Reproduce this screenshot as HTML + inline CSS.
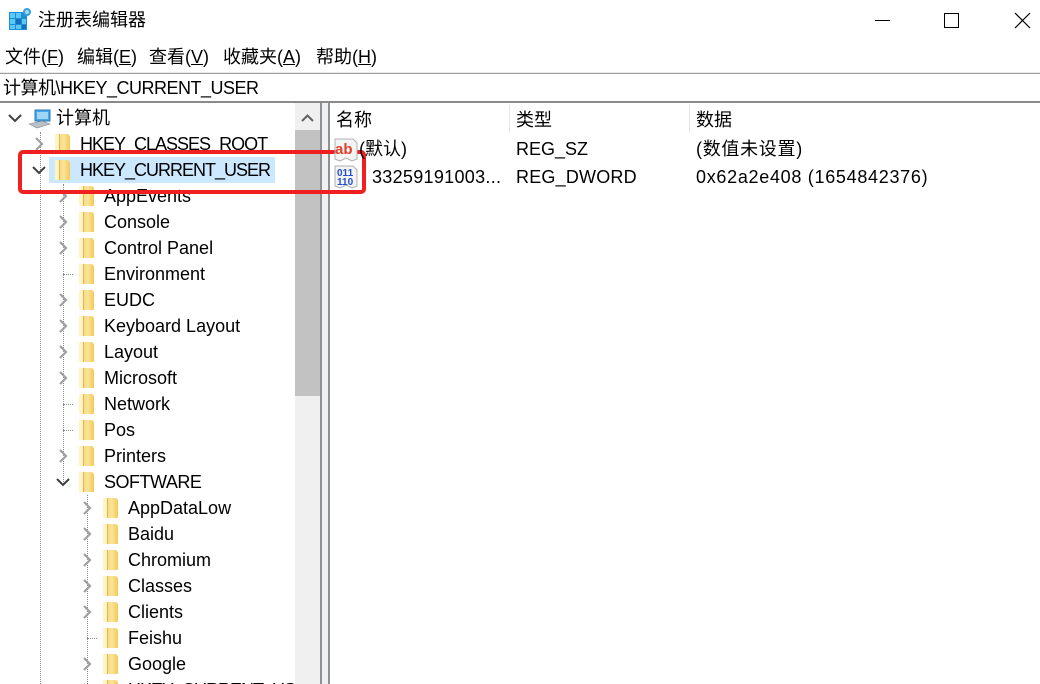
<!DOCTYPE html>
<html style="width:1040px;height:684px;overflow:hidden"><head><meta charset="utf-8"><style>
*{margin:0;padding:0;box-sizing:border-box}
body{width:1040px;height:684px;overflow:hidden;background:#fff;font-family:"Liberation Sans","Noto Sans CJK SC",sans-serif;color:#000;position:relative}
.a{position:absolute;white-space:nowrap}
.t{font-size:18px;line-height:26px;height:26px}
.f{position:absolute;width:15px;height:20px;background:linear-gradient(90deg,#f0c84a 0,#f8dc80 30%,#fbe39a 60%,#f2c955 100%);border-radius:1px 3px 1px 1px}
.f:before{content:"";position:absolute;left:0;top:0;width:4px;height:20px;background:#fff3c8;border-right:1px solid #e0b84a}
.dv{position:absolute;border-left:1px dotted #8a8a8a;width:0}
.dh{position:absolute;border-top:1px dotted #8a8a8a;height:0}
.m{position:absolute;top:45px;font-size:18px;line-height:24px;white-space:nowrap}
</style></head><body>
<svg class="a" style="left:9px;top:7px" width="23" height="24" viewBox="0 0 23 24">
<rect x="0" y="5" width="18" height="18" fill="#1e8fd6"/>
<g fill="#5cc8f5"><rect x="1" y="6" width="5" height="5"/><rect x="7" y="6" width="5" height="5"/><rect x="1" y="12" width="5" height="5"/><rect x="13" y="12" width="4" height="5"/><rect x="7" y="18" width="5" height="4"/><rect x="1" y="18" width="5" height="4"/></g>
<g fill="#1670b8"><rect x="7" y="12" width="5" height="5"/><rect x="13" y="18" width="4" height="4"/></g>
<circle cx="18" cy="5" r="4" fill="#3aa0e0"/><circle cx="18" cy="5" r="2" fill="#9fd8f8"/>
</svg>
<div class="a" style="left:38px;top:8px;font-size:18px;line-height:24px">注册表编辑器</div>
<div class="a" style="left:875px;top:20px;width:15px;height:1px;background:#000"></div>
<div class="a" style="left:944px;top:13px;width:15px;height:15px;border:1px solid #000"></div>
<svg class="a" style="left:1014px;top:12px" width="17" height="17"><path d="M1 1L16 16M16 1L1 16" stroke="#000" stroke-width="1.2"/></svg>
<div class="m" style="left:5px">文件(<u>F</u>)</div>
<div class="m" style="left:77px">编辑(<u>E</u>)</div>
<div class="m" style="left:149px">查看(<u>V</u>)</div>
<div class="m" style="left:223px">收藏夹(<u>A</u>)</div>
<div class="m" style="left:316px">帮助(<u>H</u>)</div>
<div class="a" style="left:0;top:72px;width:1040px;height:2px;background:#a0a0a0;border-top:1px solid #e8e8e8"></div>
<div class="a" style="left:3px;top:76px;font-size:18px;line-height:24px;letter-spacing:-0.5px">计算机\HKEY_CURRENT_USER</div>
<div class="a" style="left:0;top:101px;width:1040px;height:2px;background:#8a8a8a"></div>
<div class="a" style="left:295px;top:103px;width:25px;height:581px;background:#f0f0f0"></div>
<div class="a" style="left:295px;top:130px;width:25px;height:266px;background:#c2c2c2"></div>
<svg class="a" style="left:300px;top:112px" width="15" height="12"><path d="M2 9L7.5 3.5L13 9" stroke="#606060" stroke-width="2" fill="none"/></svg>
<div class="a" style="left:320px;top:103px;width:10px;height:581px;background:#f0f0f0;border-left:2px solid #8e9098;border-right:2px solid #8e9098"></div>
<div class="a" style="left:0;top:103px;width:295px;height:581px;overflow:hidden">
<div style="position:absolute;left:0;top:-103px;width:295px;height:684px">
<div class="dv" style="left:40px;top:132px;height:552px"></div>
<div class="dv" style="left:63px;top:184px;height:300px"></div>
<div class="dh" style="left:63px;top:274px;width:10px"></div>
<div class="dh" style="left:63px;top:404px;width:10px"></div>
<div class="dh" style="left:63px;top:430px;width:10px"></div>
<div class="dv" style="left:87px;top:495px;height:189px"></div>
<div class="dh" style="left:87px;top:638px;width:10px"></div>
<div class="a" style="left:49px;top:157px;width:226px;height:26px;background:#cce8ff"></div>
<svg class="a" style="left:7px;top:111px" width="16" height="14"><path d="M2 4L8 10L14 4" stroke="#404040" stroke-width="2" fill="none"/></svg>
<svg class="a" style="left:28px;top:108px" width="24" height="22"><rect x="7" y="2" width="15" height="11" fill="#4aa8e8" stroke="#2a78b8"/><rect x="9" y="4" width="11" height="7" fill="#9ed6f8"/><path d="M1 16L14 13L22 16L9 20Z" fill="#b8c0c8" stroke="#808890" stroke-width=".6"/></svg>
<div class="a t" style="left:56px;top:105px">计算机</div>
<div id="tree"></div>
</div></div>
<div class="a" style="left:18px;top:150px;width:348px;height:44px;border:4px solid #f02020;border-radius:5px"></div>
<div class="a t" style="left:336px;top:107px">名称</div>
<div class="a t" style="left:516px;top:107px">类型</div>
<div class="a t" style="left:696px;top:107px">数据</div>
<div class="a" style="left:509px;top:105px;width:1px;height:28px;background:#e5e5e5"></div>
<div class="a" style="left:689px;top:105px;width:1px;height:28px;background:#e5e5e5"></div>
<svg class="a" style="left:333px;top:138px" width="26" height="24"><path d="M2 1H20L24 5V21L19 23L13 20L7 23L2 21Z" fill="#f4f4f4" stroke="#b0b0b0"/><text x="2" y="16" font-family="Liberation Sans" font-weight="bold" font-size="15" fill="#e0402a">ab</text></svg>
<div class="a t" style="left:359px;top:136px">(默认)</div>
<div class="a t" style="left:516px;top:136px">REG_SZ</div>
<div class="a t" style="left:696px;top:136px;letter-spacing:0.7px">(数值未设置)</div>
<svg class="a" style="left:333px;top:165px" width="26" height="24"><path d="M2 1H20L24 5V21L19 23L13 20L7 23L2 21Z" fill="#f4f4f4" stroke="#b0b0b0"/><text x="4" y="11" font-family="Liberation Sans" font-weight="bold" font-size="10" fill="#2050d0">011</text><text x="4" y="20" font-family="Liberation Sans" font-weight="bold" font-size="10" fill="#2050d0">110</text></svg>
<div class="a t" style="left:372px;top:164px;letter-spacing:0.3px">33259191003...</div>
<div class="a t" style="left:516px;top:164px;letter-spacing:0.2px">REG_DWORD</div>
<div class="a t" style="left:696px;top:164px;letter-spacing:0.7px">0x62a2e408 (1654842376)</div>
<script>
var rows=[[144,1,'r','HKEY_CLASSES_ROOT',-1],[170,1,'d','HKEY_CURRENT_USER',-1],[196,2,'r','AppEvents'],[222,2,'r','Console'],[248,2,'r','Control Panel'],[274,2,'','Environment'],[300,2,'r','EUDC'],[326,2,'r','Keyboard Layout'],[352,2,'r','Layout'],[378,2,'r','Microsoft'],[404,2,'','Network'],[430,2,'','Pos'],[456,2,'r','Printers'],[482,2,'d','SOFTWARE',-0.5],[508,3,'r','AppDataLow'],[534,3,'r','Baidu'],[560,3,'r','Chromium'],[586,3,'r','Classes'],[612,3,'r','Clients'],[638,3,'','Feishu'],[664,3,'r','Google'],[690,3,'r','HKEY_CURRENT_USER',-1]];
var h='';rows.forEach(function(r){var y=r[0],o=(r[1]-1)*24;
if(r[2]=='r')h+='<svg class="a" style="left:'+(33+o)+'px;top:'+(y-8)+'px" width="12" height="16"><path d="M3 2L9 8L3 14" stroke="#a0a0a0" stroke-width="2.2" fill="none"/></svg>';
if(r[2]=='d')h+='<svg class="a" style="left:'+(31+o)+'px;top:'+(y-7)+'px" width="16" height="14"><path d="M2 4L8 10L14 4" stroke="#404040" stroke-width="2" fill="none"/></svg>';
h+='<div class="f" style="left:'+(55+o)+'px;top:'+(y-10)+'px"></div>';
h+='<div class="a t" style="left:'+(80+o)+'px;top:'+(y-13)+'px;letter-spacing:'+(r[4]||0)+'px">'+r[3]+'</div>';});
document.getElementById('tree').innerHTML=h;
</script>
</body></html>
